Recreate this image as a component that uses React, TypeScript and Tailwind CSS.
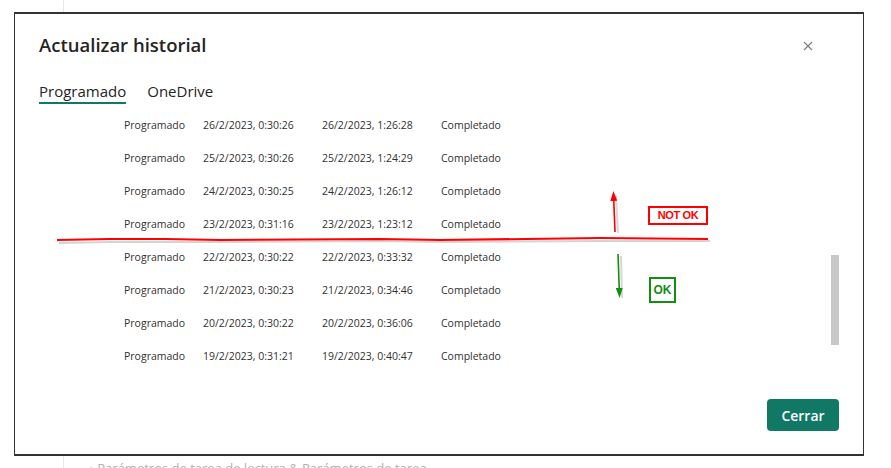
const rows = [
  ['26/2/2023, 0:30:26', '26/2/2023, 1:26:28'],
  ['25/2/2023, 0:30:26', '25/2/2023, 1:24:29'],
  ['24/2/2023, 0:30:25', '24/2/2023, 1:26:12'],
  ['23/2/2023, 0:31:16', '23/2/2023, 1:23:12'],
  ['22/2/2023, 0:30:22', '22/2/2023, 0:33:32'],
  ['21/2/2023, 0:30:23', '21/2/2023, 0:34:46'],
  ['20/2/2023, 0:30:22', '20/2/2023, 0:36:06'],
  ['19/2/2023, 0:31:21', '19/2/2023, 0:40:47'],
];

function Annotations() {
  return (
    <div className="pointer-events-none absolute inset-0">
      <svg width="891" height="468" className="absolute left-0 top-0">
        <defs>
          <marker id="headRed" markerWidth="10" markerHeight="7" refX="2" refY="3.5" orient="auto" markerUnits="userSpaceOnUse">
            <path d="M0,0 L10,3.5 L0,7 Z" fill="#ff0000" />
          </marker>
          <marker id="headGreen" markerWidth="10" markerHeight="7" refX="2" refY="3.5" orient="auto" markerUnits="userSpaceOnUse">
            <path d="M0,0 L10,3.5 L0,7 Z" fill="#109010" />
          </marker>
        </defs>
        {/* shadows */}
        <polyline
          points="59,243 110,242 165,242 220,242 380,241 440,242 600,241 710,241"
          fill="none"
          stroke="#d4d4d4"
          strokeWidth="2"
        />
        <line x1="618" y1="233" x2="616" y2="196" stroke="#d8d8d8" strokeWidth="2" />
        <line x1="621" y1="256" x2="622" y2="298" stroke="#d8d8d8" strokeWidth="2" />
        {/* red line */}
        <polyline
          points="57,240 110,239 165,239 220,240 380,239 440,240 600,238 708,239"
          fill="none"
          stroke="#ff0000"
          strokeWidth="2"
        />
        <line x1="615" y1="232" x2="613.7" y2="199" stroke="#ff0000" strokeWidth="1.6" markerEnd="url(#headRed)" />
        <line x1="618" y1="254" x2="619.3" y2="290" stroke="#109010" strokeWidth="1.6" markerEnd="url(#headGreen)" />
      </svg>
      <div className="absolute left-[648px] top-[206px] flex h-[19px] w-[60px] items-center justify-center border-2 border-[#ff0000] bg-white text-[11px] font-bold tracking-[-0.4px] text-[#ff0000] [font-family:'Liberation_Sans',Arial,sans-serif]">
        NOT OK
      </div>
      <div className="absolute left-[649px] top-[277px] flex h-[26px] w-[27px] items-center justify-center border-2 border-[#109010] bg-white text-[12px] font-bold text-[#109010] [font-family:'Liberation_Sans',Arial,sans-serif]">
        OK
      </div>
    </div>
  );
}

export default function App() {
  return (
    <div className="relative h-[468px] w-[891px] overflow-hidden bg-white [font-family:'Segoe_UI','Open_Sans','Noto_Sans',sans-serif]">
      {/* page behind the dialog */}
      <div className="ml-[63px] flex h-full border-l border-[#e8e8e8]">
        <div className="mt-[459px] pl-[26px] text-[13px] leading-[18px] text-[#b0b0b0]">
          › Parámetros de tarea de lectura &amp; Parámetros de tarea
        </div>
      </div>

      {/* dialog */}
      <div className="absolute left-[14px] top-[12px] flex h-[444px] w-[850px] flex-col border-x border-t-2 border-b-2 border-[#333333] bg-white">
        <div className="flex items-start justify-between pl-[24px] pr-[50px] pt-[17px]">
          <h1 className="text-[18.5px] font-semibold leading-[28px] text-[#252423]">Actualizar historial</h1>
          <button className="mt-[10px] text-[#605e5c]">
            <svg width="10" height="10" viewBox="0 0 10 10">
              <path d="M1 1 L9 9 M9 1 L1 9" stroke="#7a7a7a" strokeWidth="1.1" />
            </svg>
          </button>
        </div>

        <div className="mt-[22px] flex gap-[21px] pl-[24px] text-[15px] leading-[20px] text-[#252423]">
          <div className="border-b-2 border-[#117865] pb-[1px]">Programado</div>
          <div>OneDrive</div>
        </div>

        <div className="relative mt-[3px] h-[262px] overflow-hidden">
          <div className="flex flex-col pl-[109px] pt-[2px]">
            {rows.map((r, i) => (
              <div key={i} className="grid h-[33px] grid-cols-[79px_119px_119px_auto] items-center text-[10.5px] text-[#323130]">
                <span>Programado</span>
                <span>{r[0]}</span>
                <span>{r[1]}</span>
                <span>Completado</span>
              </div>
            ))}
          </div>
          <div className="absolute right-[24px] top-[148px] h-[90px] w-[8px] bg-[#c8c8c8]" />
        </div>

        <div className="mt-auto flex justify-end pb-[23px] pr-[24px]">
          <button className="h-[32px] w-[72px] rounded-[4px] bg-[#117865] text-[14px] font-semibold text-white">
            Cerrar
          </button>
        </div>
      </div>

      <Annotations />
    </div>
  );
}
